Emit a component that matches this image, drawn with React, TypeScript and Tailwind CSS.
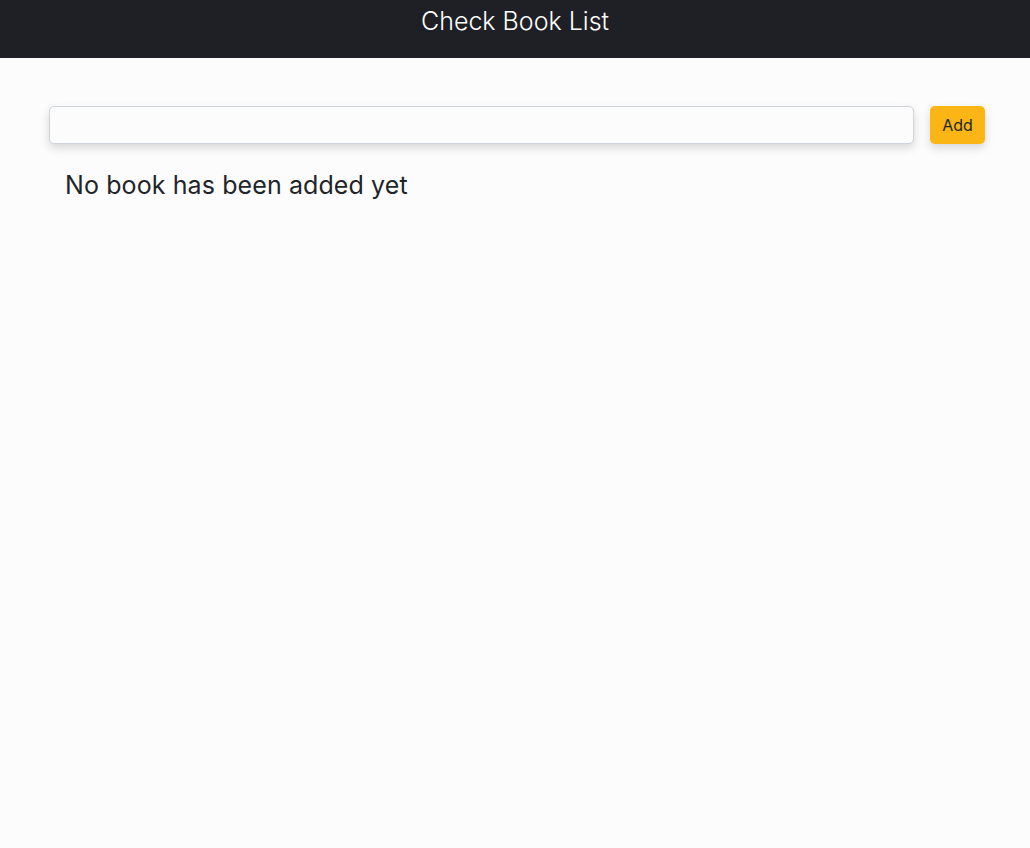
export default function App() {
  return (
    <div className="min-h-[848px] bg-[#fdfcfd] font-['Inter',sans-serif]">
      <header className="h-[58px] bg-[#1f2025] flex items-center justify-center">
        <h1 className="text-[25px] font-light text-white -mt-[14px]">Check Book List</h1>
      </header>

      <main className="pl-[49px] pr-[45px] pt-[48px]">
        <div className="flex items-center gap-4">
          <input
            type="text"
            className="flex-1 h-[38px] rounded-[5px] border border-[#ced4da] bg-[#fdfcfd] shadow-[0_4px_10px_rgba(0,0,0,0.15)] outline-none px-3"
          />
          <button className="h-[38px] w-[55px] rounded-[5px] bg-[#fbb514] text-[16px] text-[#212529] shadow-[0_4px_10px_rgba(0,0,0,0.15)]">
            Add
          </button>
        </div>
        <p className="mt-[26px] pl-4 text-[25px] font-normal leading-[30px] text-[#212529] tracking-[0.1px]">
          No book has been added yet
        </p>
      </main>
    </div>
  );
}
